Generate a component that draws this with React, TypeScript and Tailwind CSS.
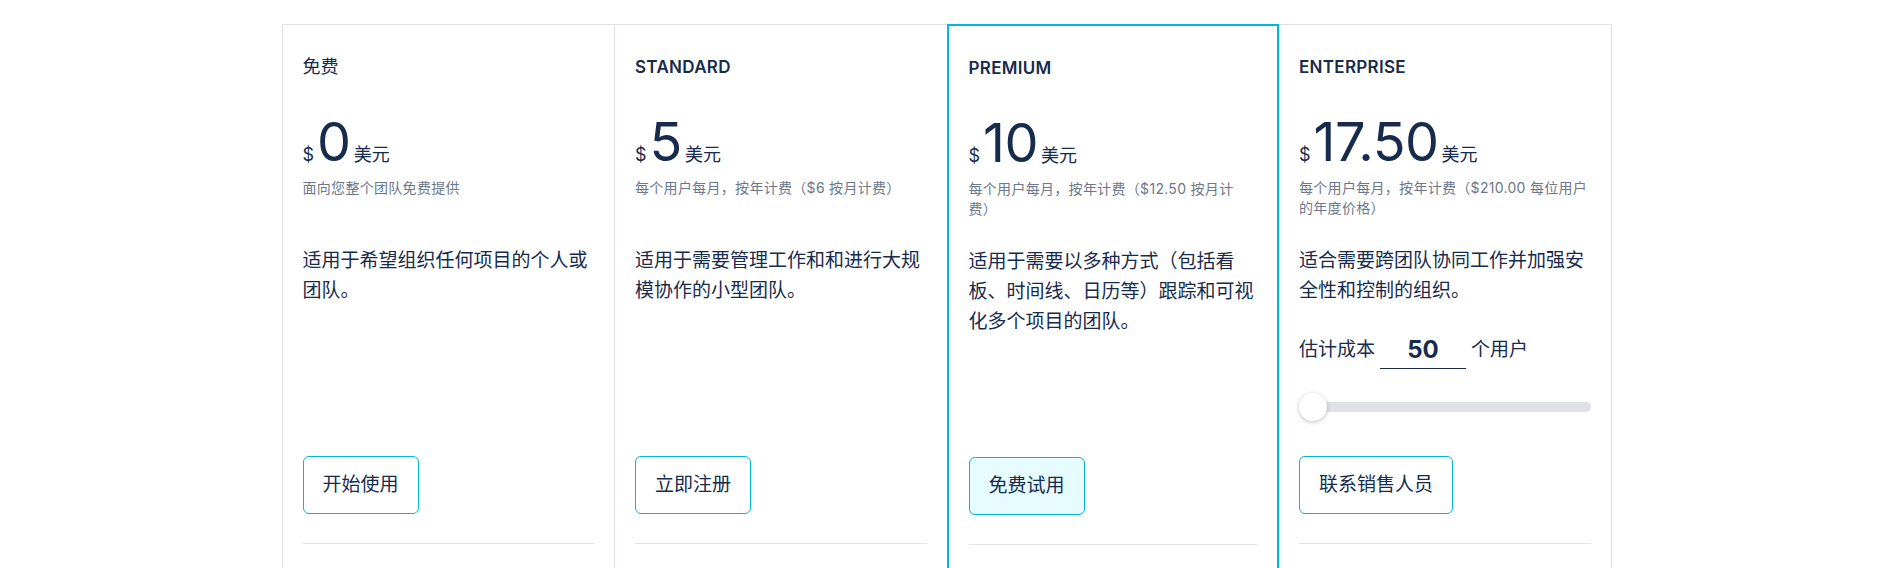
import { useState } from 'react'

interface Plan {
  title: string
  latin: boolean
  price: string
  note: string
  desc: string
  cta: string
  featured?: boolean
  estimator?: boolean
}

const plans: Plan[] = [
  { title: '免费', latin: false, price: '0', note: '面向您整个团队免费提供', desc: '适用于希望组织任何项目的个人或团队。', cta: '开始使用' },
  { title: 'STANDARD', latin: true, price: '5', note: '每个用户每月，按年计费（$6 按月计费）', desc: '适用于需要管理工作和和进行大规模协作的小型团队。', cta: '立即注册' },
  { title: 'PREMIUM', latin: true, price: '10', note: '每个用户每月，按年计费（$12.50 按月计\n费）', desc: '适用于需要以多种方式（包括看板、时间线、日历等）跟踪和可视化多个项目的团队。', cta: '免费试用', featured: true },
  { title: 'ENTERPRISE', latin: true, price: '17.50', note: '每个用户每月，按年计费（$210.00 每位用户的年度价格）', desc: '适合需要跨团队协同工作并加强安全性和控制的组织。', cta: '联系销售人员', estimator: true },
]

function Estimator() {
  const [users, setUsers] = useState('50')
  return (
    <div>
      <div className="mt-[25px] flex items-center h-[38px] text-[19px]">
        <span>估计成本</span>
        <input
          value={users}
          onChange={e => setUsers(e.target.value)}
          className="mx-[5px] w-[86px] h-[38px] border-b border-[#172b4d] text-center text-[24px] font-bold text-[#172b4d] outline-none bg-transparent"
        />
        <span>个用户</span>
      </div>
      <div className="mt-6 relative h-[28px] flex items-center">
        <div className="w-full h-[10px] rounded-full bg-[#dfe1e6]" />
        <div className="absolute left-0 top-0 w-[28px] h-[28px] rounded-full bg-white shadow-[0_1px_4px_rgba(9,30,66,0.3)]" />
      </div>
    </div>
  )
}

function PlanCard({ plan, index }: { plan: Plan; index: number }) {
  const border = plan.featured
    ? 'border-2 border-[#00b8d9] relative z-10'
    : index === 3
      ? 'border-t border-r border-[#dfe1e6]'
      : 'border-t border-l border-[#dfe1e6]'

  return (
    <div className={`${border} px-5 pt-[30px] min-h-[600px]`}>
      <h3 className={plan.latin ? 'text-[17px] leading-6 font-semibold tracking-[0.3px]' : 'text-[18px] leading-6 font-normal'}>
        {plan.title}
      </h3>

      <div className="mt-9 flex items-baseline h-[54px]">
        <span className="text-[18px]">$</span>
        <span className="ml-[3px] text-[54px] leading-none font-normal tracking-[-0.5px]">{plan.price}</span>
        <span className="ml-[3px] text-[18px]">美元</span>
      </div>

      <p className="mt-[9px] min-h-[40px] text-[14px] leading-5 tracking-[0.3px] text-[#6b778c] whitespace-pre-line">{plan.note}</p>

      <div className="mt-7 h-[210px]">
        <p className="text-[19px] leading-[30px]">{plan.desc}</p>
        {plan.estimator && <Estimator />}
      </div>

      <button
        className={`h-[58px] px-[19px] rounded-md border border-[#00b8d9] text-[19px] ${plan.featured ? 'bg-[#e6fcff]' : 'bg-white'}`}
      >
        {plan.cta}
      </button>

      <div className="mt-[29px] border-t border-[#dfe1e6]" />
    </div>
  )
}

export default function App() {
  return (
    <div
      className="min-h-screen bg-white text-[#172b4d]"
      style={{ fontFamily: 'Inter, "Noto Sans CJK SC", sans-serif' }}
    >
      <div className="mx-auto mt-6 w-[1330px] grid grid-cols-4">
        {plans.map((plan, i) => (
          <PlanCard key={plan.title} plan={plan} index={i} />
        ))}
      </div>
    </div>
  )
}
